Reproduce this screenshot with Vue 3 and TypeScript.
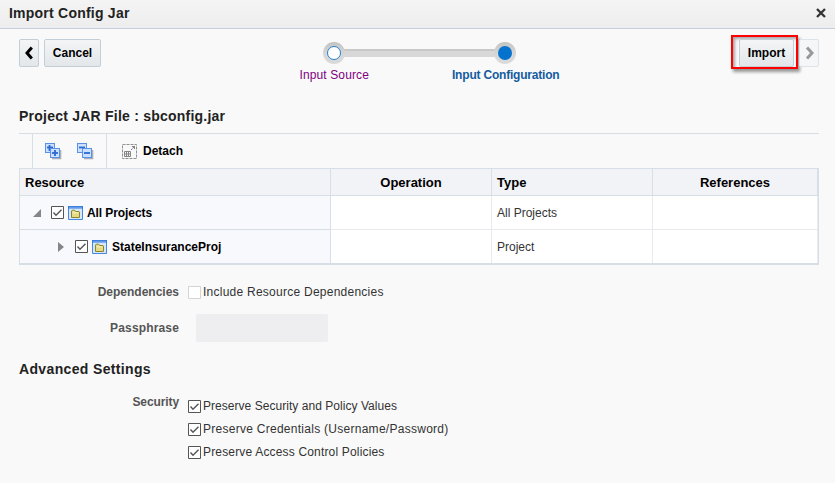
<script setup lang="ts">
interface ResourceRow {
  name: string
  type: string
  expanded: boolean
  child: boolean
}

const rows: ResourceRow[] = [
  { name: 'All Projects', type: 'All Projects', expanded: true, child: false },
  { name: 'StateInsuranceProj', type: 'Project', expanded: false, child: true },
]

const security = [
  { text: 'Preserve Security and Policy Values', cls: 'policy' },
  { text: 'Preserve Credentials (Username/Password)', cls: 'credentials' },
  { text: 'Preserve Access Control Policies', cls: 'access' },
]
</script>

<template>
  <div class="dialog">
    <header class="titlebar">
      <h1>Import Config Jar</h1>
      <svg class="close" width="10" height="10" viewBox="0 0 10 10"><path d="M1 1L9 9M9 1L1 9" /></svg>
    </header>

    <div class="nav">
      <div class="left">
        <button class="btn arrow"><svg width="8" height="14" viewBox="0 0 8 14"><path d="M6.8 1.4L2 7L6.8 12.6" /></svg></button>
        <button class="btn cancel">Cancel</button>
      </div>
      <div class="train">
        <svg width="195" height="22" viewBox="0 0 195 22">
          <defs>
            <linearGradient id="ring" x1="0" y1="0" x2="0" y2="1">
              <stop offset="0" stop-color="#c2c2c2" /><stop offset=".5" stop-color="#d6d6d6" /><stop offset="1" stop-color="#dadada" />
            </linearGradient>
          </defs>
          <rect x="20" y="7" width="155" height="8" fill="#d8d8d8" />
          <rect x="20" y="7" width="155" height="2" fill="#c9c9c9" />
          <circle cx="12" cy="11" r="11" fill="url(#ring)" />
          <circle cx="12" cy="11" r="6.5" fill="#fff" stroke="#2580cf" />
          <circle cx="183" cy="11" r="11" fill="url(#ring)" />
          <circle cx="183" cy="11" r="7" fill="#0572ce" />
        </svg>
        <div class="steps"><span class="visited">Input Source</span><span class="current">Input Configuration</span></div>
      </div>
      <div class="right">
        <div class="highlight"><button class="btn import">Import</button></div>
        <button class="btn arrow next"><svg width="9" height="14" viewBox="0 0 9 14"><path d="M2 1.4L7 7L2 12.6" /></svg></button>
      </div>
    </div>

    <h2 class="jar">Project JAR File : sbconfig.jar</h2>

    <div class="toolbar">
      <div class="tools">
        <svg v-for="kind in ['expand', 'collapse']" :key="kind" width="17" height="17" viewBox="0 0 17 17">
          <path d="M15.5 7v8.5H7" fill="none" stroke="#a9adb5" stroke-width="1.6" />
          <rect x=".5" y=".5" width="9" height="9" fill="#c9e0ff" stroke="#5b90e4" />
          <path d="M2 4.5h6" stroke="#2b68d0" stroke-width="1.8" />
          <path v-if="kind === 'expand'" d="M4.5 2v6" stroke="#2b68d0" stroke-width="1.8" />
          <rect x="5.5" y="5.5" width="9" height="9" fill="#c9e0ff" stroke="#5b90e4" />
          <path d="M7 10h6" stroke="#2b68d0" stroke-width="1.8" />
          <path v-if="kind === 'expand'" d="M10 7v6" stroke="#2b68d0" stroke-width="1.8" />
        </svg>
      </div>
      <div class="detach">
        <svg width="15" height="15" viewBox="0 0 15 15">
          <path d="M.5 .5h14v14H.5z" fill="none" stroke="#909090" stroke-dasharray="3 1" />
          <path d="M2.5 7.5h6v5h-6zM4.5 7v6M6.5 7v6M2 10h7" fill="none" stroke="#858585" />
          <path d="M9 6L12 3" fill="none" stroke="#808080" stroke-dasharray="1.4 .6" /><path d="M9.5 2H13V5.5z" fill="#808080" />
        </svg>
        <span>Detach</span>
      </div>
    </div>

    <div class="table">
      <div class="row head">
        <div class="cell">Resource</div><div class="cell center">Operation</div><div class="cell">Type</div><div class="cell center refs">References</div>
      </div>
      <div v-for="row in rows" :key="row.name" class="row body">
        <div class="cell resource" :class="{ child: row.child }">
          <svg class="twisty" width="9" height="10" viewBox="0 0 9 10">
            <path :d="row.expanded ? 'M8 1V9H0z' : 'M1 0L7 5L1 10z'" fill="#858688" />
          </svg>
          <svg class="check" width="13" height="13" viewBox="0 0 13 13"><path class="box" d="M.5 .5h12v12H.5z" /><path class="tick" d="M2.5 6.5L5 9.3L10.5 3.8" /></svg>
          <svg class="folder" width="15" height="14" viewBox="0 0 15 14">
            <path d="M.5 .5h14v13H.5z" fill="#d3e7fd" stroke="#4787e0" />
            <path d="M0 0h15v2.5H0z" fill="#3477dc" /><path d="M1 1.3h13" stroke="#8dbaf5" stroke-width=".7" />
            <path d="M3.5 11.5v-6.5l.8-.8h2.4l1 1.3h3.3l.5.5v5.5z" fill="#e6d985" stroke="#8f862a" />
            <path d="M4.5 6.8h6" stroke="#f8f2c4" />
          </svg>
          <span class="name">{{ row.name }}</span>
        </div>
        <div class="cell" /><div class="cell">{{ row.type }}</div><div class="cell" />
      </div>
    </div>

    <div class="form dependencies">
      <label>Dependencies</label>
      <div class="option"><svg class="check off" width="13" height="13" viewBox="0 0 13 13"><path class="box" d="M.5 .5h12v12H.5z" /></svg><span class="include">Include Resource Dependencies</span></div>
    </div>
    <div class="form passphrase">
      <label>Passphrase</label>
      <div class="field" />
    </div>

    <h2 class="advanced">Advanced Settings</h2>
    <div class="form security">
      <label>Security</label>
      <div class="options">
        <div v-for="item in security" :key="item.text" class="option">
          <svg class="check" width="13" height="13" viewBox="0 0 13 13"><path class="box" d="M.5 .5h12v12H.5z" /><path class="tick" d="M2.5 6.5L5 9.3L10.5 3.8" /></svg>
          <span :class="item.cls">{{ item.text }}</span>
        </div>
      </div>
    </div>
  </div>
</template>

<style>
body { background: #f9f9f9; }
</style>

<style scoped>
.dialog { box-sizing: border-box; width: 835px; height: 483px; overflow: hidden; background: #f9f9f9; color: #333; font: 12px/16px "Liberation Sans", Arial, sans-serif; }
.dialog * { box-sizing: border-box; }
svg { display: block; flex: none; }
span { white-space: nowrap; }
h1, h2 { margin: 0; font-size: 14px; line-height: 18px; color: #222; }
h1 { letter-spacing: .23px; }
.titlebar { height: 29px; padding: 0 9px 2px 9px; display: flex; align-items: center; justify-content: space-between; background: linear-gradient(#f4f4f4, #ededed); border-bottom: 1px solid #c4d0dc; }
.close { stroke: #333; stroke-width: 2.3; fill: none; }
.nav { height: 74px; display: flex; justify-content: space-between; padding: 6px 16px 0 19px; }
.left { display: flex; gap: 5px; padding-top: 4px; }
.btn { height: 28px; margin: 0; padding: 0; display: flex; justify-content: center; align-items: center; border: 1px solid #c4ced7; border-radius: 2px; background: linear-gradient(#f3f5f6, #e3e7ea); font: bold 12px/16px "Liberation Sans", Arial, sans-serif; color: #000; }
.arrow { width: 20px; fill: none; stroke: #000; stroke-width: 3; }
.cancel { width: 57px; }
.train { width: 265px; padding: 7px 0 0 2px; margin-left: 26px; }
.train svg { margin-left: 23px; }
.steps { display: flex; justify-content: space-between; padding: 3px 2px 0 1px; }
.visited { color: #800080; letter-spacing: .12px; }
.current { color: #145c9e; font-weight: bold; letter-spacing: -.2px; }
.right { display: flex; }
.highlight { width: 67px; height: 34px; padding: 2px 2px 2px 6px; border: 2px solid #f00; box-shadow: 2px 3px 3px #0006, inset 2px 2px 3px #0005; }
.import { width: 55px; height: 28px; margin: 0; }
.next { margin: 4px 0 0 1px; stroke: #999; border-color: #dde3e8; background: #f5f6f7; }
.jar { height: 30px; margin: 4px 0 0 19px; letter-spacing: .23px; }
.toolbar { margin: -4px 16px 0 19px; height: 35px; border-top: 1px solid #d6dfe6; display: flex; padding-left: 13px; }
.tools { width: 75px; display: flex; gap: 15px; padding: 9px 0 0 12px; border: solid #d6dfe6; border-width: 0 1px; }
.detach { display: flex; align-items: center; gap: 6px; padding-left: 15px; color: #000; font-weight: bold; }
.table { width: 800px; margin-left: 19px; border: 1px solid #d6dfe6; border-bottom-width: 2px; }
.row { display: grid; grid-template-columns: 311px 161px 161px 165px; }
.cell { display: flex; align-items: center; padding-left: 5px; border-right: 1px solid #d6dfe6; }
.head { height: 27px; border-bottom: 1px solid #d6dfe6; background: #f2f3f7; color: #000; font-size: 13px; font-weight: bold; }
.head .cell { padding-top: 2px; }
.center { justify-content: center; padding: 0; }
.body { height: 34px; background: #fff; }
.body + .body { height: 33px; }
.body .cell { border-right-color: #e8eaed; border-bottom: 1px solid #e8eaed; }
.body .cell:first-child { background: #f8f9fd; border-right-color: #d6dfe6; border-bottom-color: #d6dfe6; }
.body + .body .cell { border-bottom: 0; }
.resource { padding-left: 13px; }
.resource.child { padding-left: 37px; }
.name { color: #000; font-weight: bold; margin-left: 4px; letter-spacing: -.08px; }
.child .name { margin-left: 5px; letter-spacing: 0; }
.twisty { margin-right: 9px; }
.box { fill: #fff; stroke: #555; }
.tick { fill: none; stroke: #555; stroke-width: 1.4; }
.off .box { stroke: #d4d4d4; }
.resource .check { margin-right: 4px; }
.form { display: grid; grid-template-columns: 179px auto; }
.form label { color: #555; font-weight: bold; text-align: right; }
.passphrase label { letter-spacing: .15px; }
.security label { letter-spacing: -.1px; }
.dependencies { margin-top: 19px; }
.option { height: 16px; display: flex; align-items: center; gap: 2px; padding-left: 9px; }
.option .check { margin-top: 1px; }
.include { letter-spacing: .25px; }
.passphrase { margin-top: 14px; align-items: center; }
.field { width: 132px; height: 28px; margin-left: 17px; background: #eeeef0; border-radius: 2px; }
.advanced { margin: 18px 0 0 19px; letter-spacing: .35px; }
.security { margin-top: 16px; }
.options { padding-top: 4px; display: grid; gap: 7px; }
.policy { letter-spacing: .04px; }
.credentials { letter-spacing: .27px; }
.access { letter-spacing: .17px; }
</style>
